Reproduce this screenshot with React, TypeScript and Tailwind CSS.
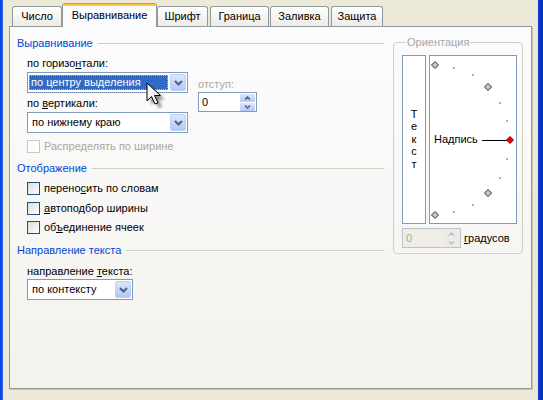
import React from "react";

function ComboBtn() {
  return (
    <div className="w-[16px] h-[17px] mr-[1px] rounded-[2px] border border-[#BCD0F7] bg-gradient-to-b from-[#DCE6FD] to-[#B4C8F5] flex items-center justify-center">
      <svg width="9" height="6" viewBox="0 0 9 6">
        <path d="M1 1L4.5 4.5L8 1" stroke="#4D6185" strokeWidth="2" fill="none" />
      </svg>
    </div>
  );
}

function Combo({ w, text, selected }: { w: string; text: string; selected?: boolean }) {
  return (
    <div className={`${w} h-[21px] border border-[#7F9DB9] bg-white flex items-center`}>
      <div className="flex-1 h-full flex items-center pl-[1px] pr-[2px]">
        {selected ? (
          <div className="flex-1 h-[15px] bg-[#316AC5] text-white border border-dotted border-[#E6B85C] flex items-center pl-[1px]">
            {text}
          </div>
        ) : (
          <span className="pl-[3px]">{text}</span>
        )}
      </div>
      <ComboBtn />
    </div>
  );
}

function SpinBtn({ up, disabled }: { up?: boolean; disabled?: boolean }) {
  return (
    <div
      className={`h-[8px] rounded-[1px] flex items-center justify-center ${
        disabled ? "bg-[#ECEBE6]" : "bg-gradient-to-b from-[#DCE6FD] to-[#B4C8F5]"
      }`}
    >
      <svg width="7" height="4" viewBox="0 0 7 4">
        <path
          d={up ? "M1 3.5L3.5 1L6 3.5" : "M1 0.5L3.5 3L6 0.5"}
          stroke={disabled ? "#C4C2B8" : "#4D6185"}
          strokeWidth="1.5"
          fill="none"
        />
      </svg>
    </div>
  );
}

function Spin({ disabled }: { disabled?: boolean }) {
  return (
    <div
      className={`w-[59px] h-[20px] border flex items-center ${
        disabled ? "border-[#B7C4D4] bg-[#EFEDE6] text-[#ACA899]" : "border-[#7F9DB9] bg-white"
      }`}
    >
      <span className="flex-1 pl-[3px]">0</span>
      <div className="w-[15px] h-[17px] mr-[1px] flex flex-col justify-between">
        <SpinBtn up disabled={disabled} />
        <SpinBtn disabled={disabled} />
      </div>
    </div>
  );
}

function Check({ children, disabled }: { children: React.ReactNode; disabled?: boolean }) {
  return (
    <div className="flex items-center h-[13px]">
      <div
        className={`w-[13px] h-[13px] border ${
          disabled ? "border-[#CAC8BB] bg-white" : "border-[#1C5180] bg-gradient-to-br from-[#DCDCD7] to-white"
        }`}
      />
      <span className={`ml-[4px] ${disabled ? "text-[#ACA899]" : ""}`}>{children}</span>
    </div>
  );
}

function Heading({ children, className }: { children: React.ReactNode; className: string }) {
  return (
    <div className={`flex items-center h-[13px] ${className}`}>
      <span className="text-[#0046D5]">{children}</span>
      <div className="flex-1 h-px bg-[#D0D0BF] ml-[5px]" />
    </div>
  );
}

function Dial() {
  const pts: JSX.Element[] = [];
  for (let i = 0; i <= 12; i++) {
    const deg = 90 - i * 15;
    const r = (deg * Math.PI) / 180;
    const x = 5 + 75 * Math.cos(r);
    const y = 84 - 75 * Math.sin(r);
    if (deg % 45 === 0) {
      const red = deg === 0;
      pts.push(
        <path
          key={i}
          d={`M${x} ${y - 3.5}L${x + 3.5} ${y}L${x} ${y + 3.5}L${x - 3.5} ${y}Z`}
          fill={red ? "#F00000" : "#C8C8C8"}
          stroke={red ? "#800000" : "#303030"}
          strokeWidth="1"
        />
      );
    } else {
      pts.push(<rect key={i} x={Math.round(x) - 1} y={Math.round(y) - 1} width="2" height="2" fill="#B0B0B0" />);
    }
  }
  return (
    <svg className="absolute inset-0" width="86" height="167" viewBox="0 0 86 167">
      <line x1="52" y1="84.5" x2="77" y2="84.5" stroke="#000" strokeWidth="1" />
      {pts}
    </svg>
  );
}

function Cursor() {
  return (
    <svg className="absolute left-[146px] top-[82px]" width="26" height="32" viewBox="0 0 26 32">
      <defs>
        <filter id="sh" x="-50%" y="-50%" width="200%" height="200%">
          <feGaussianBlur stdDeviation="1.8" />
        </filter>
      </defs>
      <path d="M5 5L5 23L9.5 18.5L13 26L16 25L12.5 17.5L18.5 17.5Z" fill="#000" opacity="0.45" filter="url(#sh)" />
      <path d="M1 1L1 19L5.5 14.5L9 22L12 21L8.5 13.5L14.5 13.5Z" fill="#F4F4F4" stroke="#000" strokeWidth="1" strokeLinejoin="miter" />
    </svg>
  );
}

function Tab({ w, ml, children, active }: { w: string; ml: string; children: React.ReactNode; active?: boolean }) {
  if (active) {
    return (
      <div className={`${w} ${ml} h-[24px] -mb-[1px] relative z-10 flex flex-col rounded-t-[3px] overflow-hidden border-x border-[#919B9C] bg-[#FCFCFE]`}>
        <div className="h-[1px] bg-[#E68B2C]" />
        <div className="h-[2px] bg-[#FFC73C]" />
        <div className="flex-1 flex items-center justify-center pb-[2px]">{children}</div>
      </div>
    );
  }
  return (
    <div
      className={`${w} ${ml} h-[20px] flex items-center justify-center rounded-t-[3px] border border-b-0 border-[#919B9C] bg-gradient-to-b from-white to-[#ECEBE5]`}
    >
      {children}
    </div>
  );
}

export default function App() {
  return (
    <div className="w-[543px] h-[400px] bg-[#ECE9D8] flex overflow-hidden relative font-['Liberation_Sans',Arial,sans-serif] text-[11px] leading-[13px] text-black">
      <div className="w-[3px] bg-gradient-to-r from-[#0A3FD6] to-[#2A63F2]" />
      <div className="flex-1 flex flex-col px-[6px]">
        <div className="h-[26px] flex items-end pl-[3px]">
          <Tab w="w-[50px]" ml="ml-0">Число</Tab>
          <Tab w="w-[95px]" ml="ml-0" active>
            Выравнивание
          </Tab>
          <Tab w="w-[51px]" ml="ml-0">Шрифт</Tab>
          <Tab w="w-[59px]" ml="ml-[2px]">Граница</Tab>
          <Tab w="w-[59px]" ml="ml-[1px]">Заливка</Tab>
          <Tab w="w-[52px]" ml="ml-[2px]">Защита</Tab>
        </div>
        <div className="h-[363px] border border-[#919B9C] bg-gradient-to-b from-[#FCFCFE] to-[#F3F2EC] shadow-[1px_1px_0_#C8C6B8] flex pl-[7px]">
          <div className="w-[367px] flex flex-col">
            <Heading className="mt-[10px]">Выравнивание</Heading>
            <div className="flex ml-[10px] mt-[7px]">
              <div className="flex flex-col">
                <div>
                  по горизо<span className="underline">н</span>тали:
                </div>
                <div className="mt-[2px]">
                  <Combo w="w-[161px]" text="по центру выделения" selected />
                </div>
                <div className="mt-[4px]">
                  по <span className="underline">в</span>ертикали:
                </div>
                <div className="mt-[2px]">
                  <Combo w="w-[161px]" text="по нижнему краю" />
                </div>
              </div>
              <div className="flex flex-col ml-[10px]">
                <div className="mt-[21px] text-[#ACA899]">отступ:</div>
                <div className="mt-[1px]">
                  <Spin />
                </div>
              </div>
            </div>
            <div className="ml-[10px] mt-[7px]">
              <Check disabled>Распределять по ширине</Check>
            </div>
            <Heading className="mt-[9px]">Отображение</Heading>
            <div className="ml-[10px] mt-[7px]">
              <Check>
                перено<span className="underline">с</span>ить по словам
              </Check>
            </div>
            <div className="ml-[10px] mt-[7px]">
              <Check>
                <span className="underline">а</span>втоподбор ширины
              </Check>
            </div>
            <div className="ml-[10px] mt-[6px]">
              <Check>
                об<span className="underline">ъ</span>единение ячеек
              </Check>
            </div>
            <Heading className="mt-[10px]">Направление текста</Heading>
            <div className="ml-[10px] mt-[8px]">
              направление <span className="underline">т</span>екста:
            </div>
            <div className="ml-[10px] mt-[1px]">
              <Combo w="w-[106px]" text="по контексту" />
            </div>
          </div>
          <fieldset className="ml-[9px] mt-[9px] self-start w-[130px] border border-[#D0D0BF] rounded-[4px] pl-[8px] pr-[5px] pb-[5px]">
            <legend className="ml-[4px] px-[1px] text-[#A8A8A8]">Ориентация</legend>
            <div className="flex mt-[6px]">
              <div className="w-[24px] h-[169px] border border-[#7F9DB9] bg-white flex flex-col items-center justify-center leading-[12.5px] pb-[1px]">
                <span>Т</span>
                <span>е</span>
                <span>к</span>
                <span>с</span>
                <span>т</span>
              </div>
              <div className="w-[88px] h-[169px] ml-[3px] border border-[#7F9DB9] bg-white relative flex items-center pl-[4px]">
                <Dial />
                <span className="relative">Надпись</span>
              </div>
            </div>
            <div className="flex items-center mt-[4px]">
              <Spin disabled />
              <span className="ml-[3px]">
                <span className="underline">г</span>радусов
              </span>
            </div>
          </fieldset>
        </div>
      </div>
      <div className="w-[5px] bg-gradient-to-r from-[#0B3BD0] to-[#0630B8]" />
      <Cursor />
    </div>
  );
}
